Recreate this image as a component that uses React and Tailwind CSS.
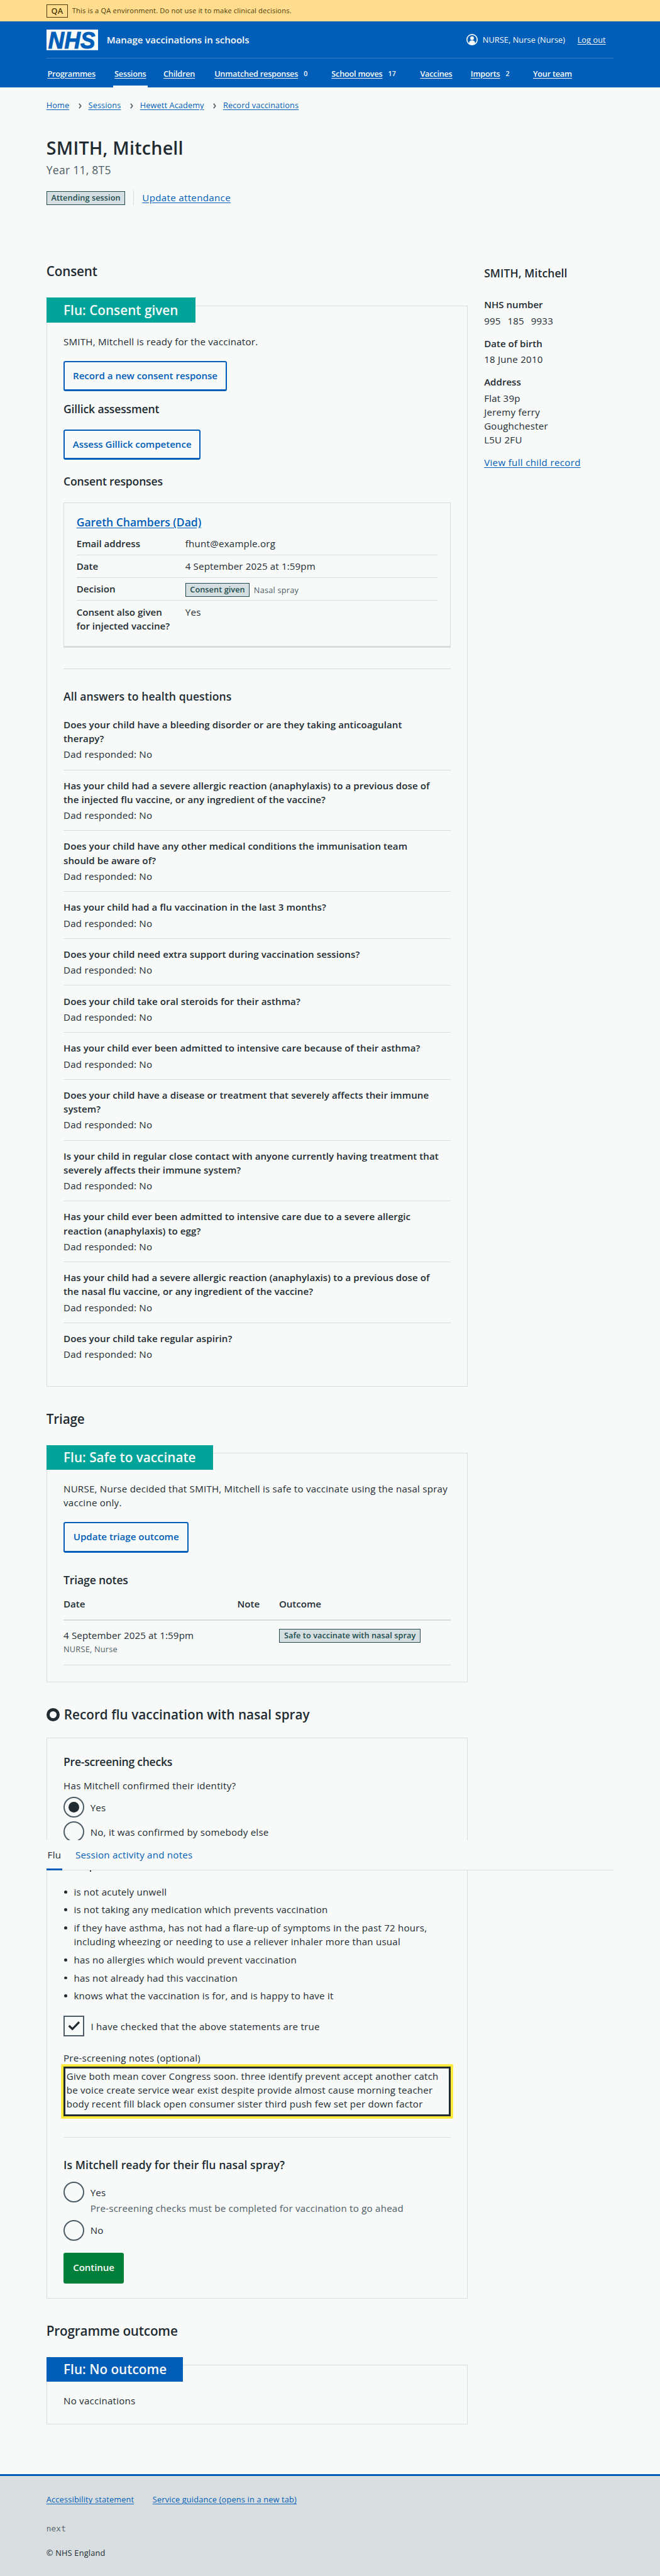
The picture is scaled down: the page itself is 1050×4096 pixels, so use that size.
const QUESTIONS = [
  ["Does your child have a bleeding disorder or are they taking anticoagulant", "therapy?"],
  ["Has your child had a severe allergic reaction (anaphylaxis) to a previous dose of", "the injected flu vaccine, or any ingredient of the vaccine?"],
  ["Does your child have any other medical conditions the immunisation team", "should be aware of?"],
  ["Has your child had a flu vaccination in the last 3 months?"],
  ["Does your child need extra support during vaccination sessions?"],
  ["Does your child take oral steroids for their asthma?"],
  ["Has your child ever been admitted to intensive care because of their asthma?"],
  ["Does your child have a disease or treatment that severely affects their immune", "system?"],
  ["Is your child in regular close contact with anyone currently having treatment that", "severely affects their immune system?"],
  ["Has your child ever been admitted to intensive care due to a severe allergic", "reaction (anaphylaxis) to egg?"],
  ["Has your child had a severe allergic reaction (anaphylaxis) to a previous dose of", "the nasal flu vaccine, or any ingredient of the vaccine?"],
  ["Does your child take regular aspirin?"],
];

const STATEMENTS = [
  ["is not acutely unwell"],
  ["is not taking any medication which prevents vaccination"],
  ["if they have asthma, has not had a flare-up of symptoms in the past 72 hours,", "including wheezing or needing to use a reliever inhaler more than usual"],
  ["has no allergies which would prevent vaccination"],
  ["has not already had this vaccination"],
  ["knows what the vaccination is for, and is happy to have it"],
];

const NAV = [
  { label: "Programmes", width: "w-[130px]" },
  { label: "Sessions", width: "w-[95px]", active: true },
  { label: "Children", width: "w-[99px]" },
  { label: "Unmatched responses", width: "w-[227px]", count: "0" },
  { label: "School moves", width: "w-[172px]", count: "17" },
  { label: "Vaccines", width: "w-[98px]" },
  { label: "Imports", width: "w-[121px]", count: "2" },
  { label: "Your team", width: "w-[90px]" },
];

const Lines = ({ lines }) => lines.map((line) => <span key={line} className="block">{line}</span>);

function Tag({ children, className = "" }) {
  return (
    <span className={`flex h-[26px] shrink-0 items-center justify-center border border-[#204a4c] bg-[#d5dfe1] text-[15.5px] leading-[24px] font-semibold tracking-[0.006em] text-[#204a4c] ${className}`}>
      {children}
    </span>
  );
}

function SectionTitle({ children, tracking = "tracking-[-0.008em]", className = "" }) {
  return <h2 className={`text-[25.2px] leading-[36px] font-semibold ${tracking} ${className}`}>{children}</h2>;
}

function SubTitle({ children, tracking = "tracking-[0.004em]", className = "" }) {
  return <h3 className={`text-[21.4px] leading-[31px] font-semibold ${tracking} ${className}`}>{children}</h3>;
}

function Card({ badge, badgeClass, className = "", children }) {
  return (
    <section className={`border border-[#d8dde0] px-[32px] ${className}`}>
      {badge && (
        <div className={`relative -mt-[16px] -ml-[33px] flex h-[48px] items-center pl-[33px] text-[25.2px] font-semibold tracking-[0.002em] text-[#f8faf9] ${badgeClass}`}>
          {badge}
        </div>
      )}
      {children}
    </section>
  );
}

function SecondaryButton({ children, className = "" }) {
  return (
    <button className={`flex h-[59px] items-center justify-center rounded-[4px] border-[2.5px] border-b-4 border-[#005eb8] pb-[2px] text-[18.4px] font-semibold tracking-[-0.001em] text-[#005eb8] ${className}`}>
      {children}
    </button>
  );
}

function Radio({ checked, label, className = "" }) {
  return (
    <div className={`flex h-[40px] items-center ${className}`}>
      <span className="flex size-[40px] items-center justify-center rounded-full border-[2.5px] border-[#4c5b66]">
        {checked && <span className="size-[20px] rounded-full bg-[#212b32]" />}
      </span>
      <span className="ml-[12px] pt-[1px]">{label}</span>
    </div>
  );
}

function Chevron() {
  return (
    <svg className="mr-[13px] ml-[18px] h-[11px] w-[6px]" viewBox="0 0 6 11" fill="none" stroke="#4c5b66" strokeWidth="2">
      <path d="M1 1l3.6 4.5L1 10" />
    </svg>
  );
}

function Header() {
  return (
    <header>
      <div className="flex h-[42px] items-center bg-[#ffdc8e] pl-[90px] text-[#4d3b05]">
        <span className="flex h-[26px] w-[42px] items-center justify-center border border-[#4d3b05] text-[15.5px] font-semibold">QA</span>
        <span className="ml-[8px] text-[13.6px] tracking-[0.014em]">This is a QA environment. Do not use it to make clinical decisions.</span>
      </div>
      <div className="h-[128px] bg-[#005eb8] px-[90px] text-[#f8faf9]">
        <div className="flex h-[72px] w-[1100px] items-center border-b border-[#3b7ec6]">
          <svg className="h-[40px] w-[100px] overflow-visible" viewBox="0 0 100 40">
            <rect width="100" height="40" fill="#f8faf9" />
            <text x="3.5" y="36" textLength="91" lengthAdjust="spacingAndGlyphs" fill="#005eb8" stroke="#005eb8" strokeWidth="1.4" fontFamily="Liberation Sans, sans-serif" fontWeight="700" fontStyle="italic" fontSize="46">NHS</text>
          </svg>
          <span className="ml-[17px] text-[18.4px] font-semibold tracking-[-0.004em]">Manage vaccinations in schools</span>
          <svg className="ml-auto size-[22px]" viewBox="0 0 22 22">
            <circle cx="11" cy="11" r="10" fill="none" stroke="#f8faf9" strokeWidth="2" />
            <circle cx="11" cy="8.3" r="3.6" fill="#f8faf9" />
            <path d="M5.2 18.6v-1.4c0-2.8 2.2-4.6 5.8-4.6s5.8 1.8 5.8 4.6v1.4A10 10 0 0 1 11 21a10 10 0 0 1-5.8-2.4z" fill="#f8faf9" />
          </svg>
          <span className="ml-[9px] w-[184px] text-[15.6px] tracking-[0.004em]">NURSE, Nurse (Nurse)</span>
          <span className="w-[70px] text-[15.6px] tracking-[0.004em] underline underline-offset-[3px]">Log out</span>
        </div>
        <nav className="flex h-[56px]">
          {NAV.map((item) => (
            <div key={item.label} className={`shrink-0 ${item.width}`}>
              <div className={`flex h-[56px] w-fit items-center border-b-4 pt-[4px] ${item.active ? "-ml-px border-[#f8faf9] px-[3px]" : "border-transparent px-[2px]"}`}>
                <span className="text-[15.5px] font-semibold tracking-[-0.018em] whitespace-nowrap underline underline-offset-[3px]">{item.label}</span>
                {item.count && <span className="ml-[11px] text-[13px] font-semibold">{item.count}</span>}
              </div>
            </div>
          ))}
        </nav>
      </div>
    </header>
  );
}

function Sidebar() {
  return (
    <aside className="ml-[32px] w-[251px] pt-[5px]">
      <SubTitle>SMITH, Mitchell</SubTitle>
      <h4 className="mt-[32px] font-semibold tracking-normal">NHS number</h4>
      <p className="mt-[4px] flex gap-[13px]"><span>995</span><span>185</span><span>9933</span></p>
      <h4 className="mt-[17px] font-semibold tracking-normal">Date of birth</h4>
      <p className="mt-[4px]">18 June 2010</p>
      <h4 className="mt-[17px] font-semibold tracking-normal">Address</h4>
      <p className="mt-[4px]"><Lines lines={["Flat 39p", "Jeremy ferry", "Goughchester", "L5U 2FU"]} /></p>
      <p className="mt-[17px] tracking-[0.022em] text-[#005eb8] underline underline-offset-[3px]">View full child record</p>
    </aside>
  );
}

function ConsentCard() {
  return (
    <Card badge="Flu: Consent given" badgeClass="w-[289px] bg-[#00a499]" className="mt-[47px] pb-[47.8px]">
      <p className="mt-[23px]">SMITH, Mitchell is ready for the vaccinator.</p>
      <SecondaryButton className="mt-[24.5px] w-[317px]">Record a new consent response</SecondaryButton>
      <SubTitle tracking="tracking-[-0.009em]" className="mt-[19px]">Gillick assessment</SubTitle>
      <SecondaryButton className="mt-[24px] w-[266px]">Assess Gillick competence</SecondaryButton>
      <SubTitle tracking="tracking-[-0.009em]" className="mt-[26px]">Consent responses</SubTitle>
      <div className="mt-[25.5px] h-[282px] border border-b-4 border-[#d8dde0] px-[24px] pt-[22px]">
        <SubTitle tracking="tracking-[-0.002em]" className="text-[#005eb8] underline underline-offset-[3px]">Gareth Chambers (Dad)</SubTitle>
        <dl className="mt-[4px]">
          <div className="flex border-b border-[#d8dde0] py-[7.9px]">
            <dt className="w-[211px] font-semibold tracking-normal">Email address</dt>
            <dd>fhunt@example.org</dd>
          </div>
          <div className="flex border-b border-[#d8dde0] py-[7.9px]">
            <dt className="w-[211px] font-semibold tracking-normal">Date</dt>
            <dd className="tracking-[0.01em]">4 September 2025 at 1:59pm</dd>
          </div>
          <div className="flex border-b border-[#d8dde0] pt-[7.9px] pb-[8.5px]">
            <dt className="w-[211px] font-semibold tracking-normal">Decision</dt>
            <dd className="flex h-[27px] items-center pt-[4px] text-[15.5px] text-[#4c5b66]">
              <Tag className="mr-[8px] w-[125px]">Consent given</Tag>
              Nasal spray
            </dd>
          </div>
          <div className="flex pt-[8px]">
            <dt className="w-[211px] font-semibold tracking-normal"><Lines lines={["Consent also given", "for injected vaccine?"]} /></dt>
            <dd>Yes</dd>
          </div>
        </dl>
      </div>
      <hr className="mt-[40px] border-[#d8dde0]" />
      <SubTitle className="mt-[38px]">All answers to health questions</SubTitle>
      <div className="mt-[8.7px]">
        {QUESTIONS.map((lines, i) => (
          <div key={i} className="border-b border-[#d8dde0] pt-[16px] pb-[15.86px] last:border-b-0 last:pb-0">
            <h4 className="font-semibold tracking-[0.005em]"><Lines lines={lines} /></h4>
            <p className="mt-[4px]">Dad responded: No</p>
          </div>
        ))}
      </div>
    </Card>
  );
}

function TriageCard() {
  return (
    <Card badge="Flu: Safe to vaccinate" badgeClass="w-[323px] bg-[#00a499]" className="mt-[47.2px] pb-[32px]">
      <p className="mt-[23px]">
        <Lines lines={["NURSE, Nurse decided that SMITH, Mitchell is safe to vaccinate using the nasal spray", "vaccine only."]} />
      </p>
      <SecondaryButton className="mt-[24.5px] w-[243px]">Update triage outcome</SecondaryButton>
      <SubTitle tracking="tracking-[-0.008em]" className="mt-[38.3px]">Triage notes</SubTitle>
      <div className="mt-[16px] flex border-b-[2.5px] border-[#d8dde0] pb-[16.7px] font-semibold tracking-normal">
        <span className="w-[337px]">Date</span>
        <span className="w-[81px]">Note</span>
        <span>Outcome</span>
      </div>
      <div className="flex border-b border-[#d8dde0] pt-[15px] pb-[16.5px]">
        <div className="w-[418px]">
          <p className="tracking-[0.01em]">4 September 2025 at 1:59pm</p>
          <p className="mt-[3px] text-[15.5px] leading-[24px] text-[#4c5b66]">NURSE, Nurse</p>
        </div>
        <Tag className="mt-[2px] w-[275px]">Safe to vaccinate with nasal spray</Tag>
      </div>
    </Card>
  );
}

function StickyTabs() {
  return (
    <div className="relative z-10">
      <div className="absolute -top-[4px] -left-[33px] flex h-[59px] w-[1100px] items-stretch border-b border-[#d8dde0] bg-[#f8faf9]">
        <span className="-mb-px w-[30px] border-b-4 border-[#005eb8] pt-[15px] pl-[2px]">Flu</span>
        <span className="pt-[15px] pl-[26px] text-[#005eb8]">Session activity and notes</span>
      </div>
      <span className="absolute top-[55px] left-[51px] h-[2px] w-[2px] bg-[#212b32]" />
    </div>
  );
}

function RecordCard() {
  return (
    <Card className="mt-[27px] pt-[30px] pb-[28px]">
      <SubTitle tracking="tracking-[-0.014em]">Pre-screening checks</SubTitle>
      <p className="mt-[16px] tracking-[0.021em]">Has Mitchell confirmed their identity?</p>
      <Radio checked label="Yes" className="mt-[9px]" />
      <Radio label="No, it was confirmed by somebody else" className="mt-[8px]" />
      <StickyTabs />
      <ul className="mt-[82.2px] space-y-[8px]">
        {STATEMENTS.map((lines) => (
          <li key={lines[0]} className="flex">
            <span className="mt-[11px] mr-[13px] ml-[1px] size-[6px] shrink-0 rounded-full bg-[#212b32]" />
            <span><Lines lines={lines} /></span>
          </li>
        ))}
      </ul>
      <div className="mt-[25px] flex h-[40px] items-center">
        <span className="flex size-[40px] items-center justify-center border-[2.5px] border-[#4c5b66]">
          <svg className="h-[18px] w-[24px]" viewBox="0 0 24 18" fill="none" stroke="#212b32" strokeWidth="4">
            <path d="M2 8.5l6.8 6.5L22 1.5" />
          </svg>
        </span>
        <span className="ml-[13px] pt-[1px]">I have checked that the above statements are true</span>
      </div>
      <p className="mt-[28px]">Pre-screening notes (optional)</p>
      <div className="mt-[4.4px] h-[96px] border-4 border-[#212b32] pt-[1px] pl-[2px] shadow-[0_0_0_4.6px_#ffe939]">
        <Lines
          lines={[
            "Give both mean cover Congress soon. three identify prevent accept another catch",
            "be voice create service wear exist despite provide almost cause morning teacher",
            "body recent fill black open consumer sister third push few set per down factor",
          ]}
        />
      </div>
      <hr className="mt-[39.5px] border-[#d8dde0]" />
      <SubTitle className="mt-[38px]">Is Mitchell ready for their flu nasal spray?</SubTitle>
      <Radio label="Yes" className="mt-[17px]" />
      <p className="-mt-[2px] pl-[52px] text-[#4c5b66]">Pre-screening checks must be completed for vaccination to go ahead</p>
      <Radio label="No" className="mt-[9px]" />
      <button className="mt-[24px] flex h-[59px] w-[117px] items-center justify-center rounded-[4px] bg-[#007f3b] pb-[4px] text-[18.4px] font-semibold tracking-[-0.006em] text-[#f8faf9]">
        Continue
      </button>
    </Card>
  );
}

export default function App() {
  return (
    <div className="h-[4096px] overflow-hidden bg-[#d8dde0]">
      <div className="bg-[#f8faf9] font-['Open_Sans','Noto_Sans',sans-serif] text-[18.4px] leading-[27px] tracking-[0.016em] whitespace-nowrap text-[#212b32] [zoom:0.8202]">
        <Header />
        <main className="w-[1190px] pl-[90px]">
          <div className="flex items-center pt-[23px] text-[15.5px] leading-[24px] tracking-[0.01em] text-[#005eb8]">
            {["Home", "Sessions", "Hewett Academy", "Record vaccinations"].map((crumb, i) => (
              <span key={crumb} className="flex items-center">
                {i > 0 && <Chevron />}
                <span className="underline underline-offset-[3px]">{crumb}</span>
              </span>
            ))}
          </div>
          <h1 className="mt-[46px] text-[34.9px] leading-[46px] font-semibold tracking-[0.009em]">SMITH, Mitchell</h1>
          <p className="mt-[6px] text-[21.4px] leading-[31px] text-[#4c5b66]">Year 11, 8T5</p>
          <div className="mt-[24px] flex h-[27px] items-end">
            <Tag className="w-[153px]">Attending session</Tag>
            <span className="ml-[16px] h-[27px] w-px bg-[#d8dde0]" />
            <span className="ml-[16px] tracking-[0.022em] text-[#005eb8] underline underline-offset-[3px]">Update attendance</span>
          </div>

          <div className="mt-[112px] flex">
            <div className="w-[817px]">
              <SectionTitle>Consent</SectionTitle>
              <ConsentCard />
              <SectionTitle className="mt-[45px]">Triage</SectionTitle>
              <TriageCard />
              <div className="mt-[45px] flex items-center">
                <span className="size-[26px] rounded-full border-[7px] border-[#212b32]" />
                <SectionTitle tracking="tracking-[0.003em]" className="ml-[8px]">Record flu vaccination with nasal spray</SectionTitle>
              </div>
              <RecordCard />
              <SectionTitle className="mt-[45.5px]">Programme outcome</SectionTitle>
              <Card badge="Flu: No outcome" badgeClass="w-[264px] bg-[#005eb8]" className="mt-[47px] pb-[32px]">
                <p className="mt-[22.7px]">No vaccinations</p>
              </Card>
            </div>
            <Sidebar />
          </div>
        </main>

        <footer className="mt-[96.5px] h-[210px] border-t-4 border-[#005eb8] bg-[#d8dde0] pt-[34px] pl-[90px] text-[15.5px] leading-[24px]">
          <div className="flex gap-[36px] tracking-[0.016em] text-[#005eb8]">
            <span className="underline underline-offset-[3px]">Accessibility statement</span>
            <span className="underline underline-offset-[3px]">Service guidance (opens in a new tab)</span>
          </div>
          <p className="mt-[32px] font-['DejaVu_Sans_Mono',monospace] tracking-[0.01em] text-[#5a6872]">next</p>
          <p className="mt-[24px]">© NHS England</p>
        </footer>
      </div>
    </div>
  );
}
